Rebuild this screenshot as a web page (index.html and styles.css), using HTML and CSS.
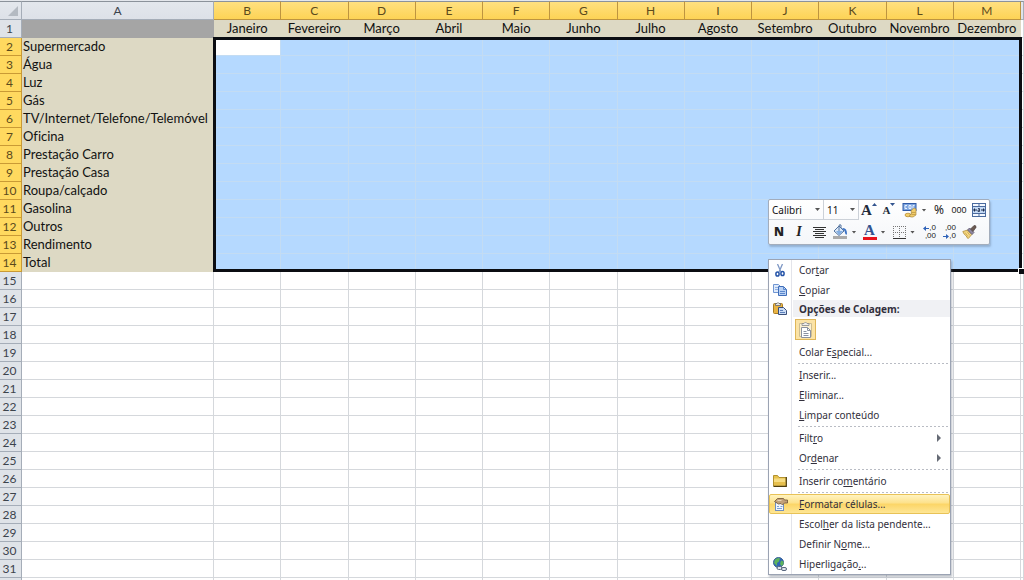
FILE: index.html
```html
<!DOCTYPE html>
<html lang="pt">
<head>
<meta charset="utf-8">
<title>Despesas</title>
<link rel="stylesheet" href="styles.css">
</head>
<body>
<main class="workbook">
  <table class="sheet">
    <colgroup id="cols"><col class="col-num"><col class="col-label"></colgroup>
    <thead id="head"></thead>
    <tbody id="body"></tbody>
  </table>
  <div class="selection"><span class="handle"></span></div>

  <div class="mini" role="toolbar" aria-label="Formatação">
    <div class="mini-row">
      <span class="pick pick-font"><select aria-label="Tipo de letra"><option>Calibri</option></select><i class="caret"></i></span>
      <span class="pick pick-size"><select aria-label="Tamanho"><option>11</option></select><i class="caret"></i></span>
      <button class="tool grow" aria-label="Aumentar"><span>A</span><svg width="5" height="3"><path d="M0 3L2.500 0L5 3z" fill="#33558f"/></svg></button>
      <button class="tool shrink" aria-label="Diminuir"><span>A</span><svg width="5" height="3"><path d="M0 0L2.500 3L5 0z" fill="#33558f"/></svg></button>
      <button class="tool wide" aria-label="Moeda"><svg width="16" height="16" viewBox="0 0 16 16"><rect x="1" y="1.500" width="13" height="7" fill="#7fa6e0" stroke="#2f5aa8"/><path d="M5 3.500H3v3h2M9 3.500H7v3h2zM12.500 3.500h-1.500v3h1.500" fill="none" stroke="#e6f0ff"/><ellipse cx="6" cy="13" rx="3" ry="1.800" fill="#f3cf6a" stroke="#a87310" stroke-width=".6"/><path d="M9 8.500l3-2.500 2 1v6l-3 2H8.500l-1-2 2-1z" fill="#f0cc6c" stroke="#9b7a33" stroke-width=".6"/><path d="M9.500 10.500h4M9.500 12.500h4" stroke="#b08a35" stroke-width=".6"/></svg><i class="caret"></i></button>
      <button class="tool percent">%</button>
      <button class="tool thousands">000</button>
      <button class="tool" aria-label="Unir e centrar"><svg width="14" height="14" viewBox="0 0 14 14"><rect x=".5" y=".5" width="13" height="13" fill="#f4f8fe" stroke="#4a6a9e"/><path d="M1 3.500h12M1 10.500h12M7 1v2.500M7 10.500V13" stroke="#4a6a9e"/><rect x="1" y="4" width="12" height="6" fill="#c4d9f4"/><path d="M2 7h3M12 7H9" stroke="#1c2c4d"/><path d="M1 7l2-2v4zM13 7l-2-2v4z" fill="#1c2c4d"/><path d="M6 5.500h1.500v3H6V7h1.500" fill="none" stroke="#1c2c4d" stroke-width=".8"/></svg></button>
    </div>
    <div class="mini-row">
      <button class="tool bold">N</button>
      <button class="tool italic">I</button>
      <button class="tool" aria-label="Centrar"><svg width="13" height="12"><path d="M0 1.500h13M2 3.500h9M0 5.500h13M2 7.500h9M0 9.500h13M2 11.500h9" stroke="#333"/></svg></button>
      <button class="tool wide" aria-label="Cor de preenchimento"><svg width="16" height="16" viewBox="0 0 16 16"><path d="M2 7l5-5 5 5-5 4.500z" fill="#dce9f9" stroke="#54749f"/><path d="M4 7h7l-4 4z" fill="#82aee3"/><path d="M7 7V2q0-2 2-1v3" fill="none" stroke="#54749f"/><path d="M11 4q4 0 4 6-1 2-2-1 0-3-3-4z" fill="#3d73c4"/><rect x="1" y="12" width="14" height="3" fill="#aaa"/></svg><i class="caret"></i></button>
      <button class="tool wide color" aria-label="Cor do tipo de letra"><span>A</span><i class="caret"></i></button>
      <button class="tool wide" aria-label="Limites"><svg width="13" height="13"><path d="M.5 0v12M6.500 0v12M12.500 0v12M0 .5h13M0 6.500h13" fill="none" stroke="#777" stroke-dasharray="1 1"/><path d="M0 12.500h13" stroke="#333"/></svg><i class="caret"></i></button>
      <button class="tool decimals"><span class="with-arrow"><svg width="6" height="5"><path d="M0 2.500L3 0v2h3v1H3v2z" fill="#2e62b8"/></svg>,0</span><span>,00</span></button>
      <button class="tool decimals"><span>,00</span><span class="with-arrow"><svg width="6" height="5"><path d="M6 2.500L3 0v2H0v1h3v2z" fill="#2e62b8"/></svg>,0</span></button>
      <button class="tool" aria-label="Pincel de formatação"><svg width="15" height="14" viewBox="0 0 15 14"><path d="M.8 6.500l5-1.500 4 4.500-3.500 4q-1.500-.5-2-2.500-2.500-1.500-3.500-4.500z" fill="#f4d984" stroke="#b08a35" stroke-width=".8"/><path d="M3 7.500l3 4M5 6.500l3 4" stroke="#cda249" stroke-width=".8"/><path d="M5.500 5l2-2 4.500 4.500-2 2z" fill="#8d86a0" stroke="#5c566f" stroke-width=".8"/><path d="M8.500 4l3.500-3.500q2.500-.5 2 2L11 6.500z" fill="#6b5a52" stroke="#443a38" stroke-width=".6"/></svg></button>
    </div>
  </div>

  <div class="menu" role="menu">
    <button class="item" role="menuitem"><span class="icon"><svg width="10" height="13" viewBox="0 0 10 13"><path d="M2.500 0l3.500 8M7.500 0L4 8" stroke="#7d97c4" stroke-width="1.300"/><ellipse cx="2.500" cy="10" rx="1.600" ry="2.100" fill="none" stroke="#2453a8" stroke-width="1.500"/><ellipse cx="7.500" cy="9.500" rx="1.600" ry="2.100" fill="none" stroke="#2453a8" stroke-width="1.500"/></svg></span><span>Cor<u>t</u>ar</span></button>
    <button class="item" role="menuitem"><span class="icon"><svg width="14" height="12" viewBox="0 0 14 12"><path d="M.5.500h5l2 2v6h-7z" fill="#dfeafa" stroke="#6f95d2"/><path d="M2 3.500h3M2 5.500h3" stroke="#8fb0e4"/><path d="M5.500 2.500h5l3 3v6h-8z" fill="#b9d1f4" stroke="#3f6db8"/><path d="M10.500 2.500v3h3M7 7.500h5M7 9.500h5" fill="none" stroke="#5c88cc"/></svg></span><span><u>C</u>opiar</span></button>
    <div class="item heading"><span class="icon"><svg width="14" height="13" viewBox="0 0 14 13"><rect x=".5" y="1.500" width="9" height="10" rx="1" fill="#e9b443" stroke="#a87b22"/><path d="M2.500 3.500V1.500H4q1-2 2 0h1.500v2z" fill="#e4e4e4" stroke="#666" stroke-width=".8"/><path d="M5.500 5.500h5l3 3v4h-8z" fill="#cbdcf5" stroke="#394f7a"/><path d="M7 8.500h3M7 10.500h5" stroke="#5b7fb9"/></svg></span><span>Opções de Colagem:</span></div>
    <div class="paste-row">
      <button class="paste" aria-label="Colar"><svg width="15" height="17" viewBox="0 0 15 17"><path d="M1.500 2.500h12v13h-12z" fill="#fbf0d2" stroke="#cdbd92"/><path d="M4 4.500V2.500h2q1.500-3 3 0h2v2z" fill="#eee" stroke="#888" stroke-width=".8"/><path d="M3.500 6.500h6l3 3v7h-9z" fill="#fff" stroke="#8a91a0"/><path d="M9.500 6.500v3h3M5.500 10.500h3M5.500 12.500h5M5.500 14.500h5" fill="none" stroke="#8a91a0"/></svg></button>
    </div>
    <button class="item" role="menuitem"><span class="icon"></span><span>Colar E<u>s</u>pecial...</span></button>
    <hr class="rule">
    <button class="item" role="menuitem"><span class="icon"></span><span><u>I</u>nserir...</span></button>
    <button class="item" role="menuitem"><span class="icon"></span><span><u>E</u>liminar...</span></button>
    <button class="item" role="menuitem"><span class="icon"></span><span><u>L</u>impar conteúdo</span></button>
    <hr class="rule">
    <button class="item sub" role="menuitem"><span class="icon"></span><span>Filt<u>r</u>o</span></button>
    <button class="item sub" role="menuitem"><span class="icon"></span><span>Or<u>d</u>enar</span></button>
    <hr class="rule">
    <button class="item" role="menuitem"><span class="icon"><svg width="14" height="12" viewBox="0 0 14 12"><path d="M.5.500h4l1.500 2h7v8.500H.5z" fill="#e8c24c" stroke="#b3922f"/><path d="M1 3.500h11.500v7H1z" fill="#f6dc83"/><path d="M1 7h11.500v3.500H1z" fill="#e6bf4d"/><path d="M13.300 2v9.300H.5" fill="none" stroke="#4d3c0d" stroke-width="1.200"/></svg></span><span>Inserir co<u>m</u>entário</span></button>
    <hr class="rule">
    <button class="item active" role="menuitem"><span class="icon"><svg width="14" height="13" viewBox="0 0 14 13"><rect x="1.500" y="4.500" width="8" height="8" fill="#f1f6fd" stroke="#6f8fc0"/><path d="M3 8.500h2M3 10.500h5M6.500 8.500h2" stroke="#7da0d6"/><path d="M.5 3.500l3-3h6l1 1.500h3v3h-3L8.500 7 7 5.500 4.500 6z" fill="#c2a078" stroke="#6e5334" stroke-width=".8"/><path d="M3.500 2.500h4" stroke="#ead5b5"/></svg></span><span><u>F</u>ormatar células...</span></button>
    <button class="item" role="menuitem"><span class="icon"></span><span>Escol<u>h</u>er da lista pendente...</span></button>
    <button class="item" role="menuitem"><span class="icon"></span><span>Definir N<u>o</u>me...</span></button>
    <button class="item" role="menuitem"><span class="icon"><svg width="14" height="14" viewBox="0 0 14 14"><circle cx="5.500" cy="5.500" r="5" fill="#2f66b5" stroke="#3a6396"/><path d="M2 2.500q3-2.500 5-1L6 4.500 4 6v3L1 6zM8 3.500l2.500 1v3L8.500 9 7 7z" fill="#5fb45c"/><rect x="4" y="9.500" width="5" height="3" rx="1.500" fill="#dde3ec" stroke="#59667d"/><rect x="8.500" y="10.500" width="5" height="3" rx="1.500" fill="#dde3ec" stroke="#59667d"/></svg></span><span>Hiperligação<u>.</u>..</span></button>
  </div>
</main>
<script src="sheet.js"></script>
</body>
</html>
```
FILE: styles.css
```css
* { box-sizing: border-box; }
body {
  margin: 0;
  height: 100vh;
  overflow: hidden;
  background: #fff;
  font-family: "Noto Sans", sans-serif;
  color: #111;
}
button, select { font: inherit; color: inherit; border: 0; padding: 0; margin: 0; background: none; }
.workbook { position: relative; border-top: 1px solid #e4e7ec; }

.sheet { width: 100%; table-layout: fixed; border-collapse: separate; border-spacing: 0; font-family: Lato, sans-serif; font-size: 13px; line-height: 17px; font-variant-ligatures: none; }
.col-num { width: 22px; }
.col-label { width: 192px; }
.col-rest { width: 3px; }
.sheet th, .sheet td {
  height: 18px;
  padding: 0;
  border-right: 1px solid #d5d8dc;
  border-bottom: 1px solid #d5d8dc;
  font-weight: 400;
  white-space: nowrap;
  overflow: hidden;
}
.sheet th { color: #3c434c; background: #dfe3e8; border-color: #a5adb8; text-align: center; font-size: 12px; }
.sheet tbody th { padding-right: 2px; }
.sheet thead th { border-top: 1px solid #8b929b; background: linear-gradient(#e3e7ed, #dde1e8); }
.sheet thead th.on { background: linear-gradient(#ffe080, #fdd355); border-color: #bd9440; color: #5b4a1c; border-top-color: #8b929b; }
.sheet tbody th.on { background: #ffd95f; border-color: #c99a35; color: #5b4a1c; }
.sheet .corner { vertical-align: bottom; }
.corner svg { display: block; margin: 0 3px 3px auto; }
.sheet .title { background: #a5a5a5; border-color: #a5a5a5; }
.sheet .month { background: #ddd9c4; border-color: #ddd9c4; text-align: center; }
.sheet .label { background: #ddd9c4; border-color: #ddd9c4; padding-left: 1px; }
.sheet .picked { background: #b5d9ff; border-color: #c3dcf3; }
.sheet .current { background: #fff; }
.selection { position: absolute; left: 213px; right: 2px; top: 36px; height: 235px; border: 3px solid #0b0d12; }
.handle { position: absolute; right: -5px; bottom: -5px; width: 6px; height: 6px; background: #0b0d12; border: solid #fff; border-width: 1px 0 0 1px; }

.mini {
  position: absolute;
  left: 768px;
  top: 198px;
  display: flex;
  flex-direction: column;
  gap: 2px;
  padding-bottom: 2px;
  border: 1px solid #a3adbc;
  border-radius: 2px;
  background: linear-gradient(#fff, #f4f6f9);
  box-shadow: 1px 2px 2px #7189a680;
}
.mini-row { display: flex; height: 20px; }
.pick { position: relative; display: flex; align-items: center; height: 20px; border: solid #ccd1d8; border-width: 0 1px 1px 0; font-size: 10px; }
.pick select { width: 100%; height: 100%; padding-left: 3px; appearance: none; outline: 0; }
.pick .caret { position: absolute; right: 3px; }
.pick-font { width: 55px; }
.pick-size { width: 35px; }
.caret { width: 5px; height: 3px; background: #555; clip-path: polygon(0 0, 100% 0, 50% 100%); }
.tool { width: 20px; height: 20px; display: flex; align-items: center; justify-content: center; font-size: 11px; line-height: 12px; color: #222; }
.tool.wide { width: 30px; gap: 4px; }
.grow, .shrink, .color { font-family: "Liberation Serif", serif; font-weight: 700; color: #222b3a; }
.grow { font-size: 15px; }
.shrink { font-size: 11px; }
.grow svg, .shrink svg { align-self: flex-start; margin-top: 3px; }
.color span { width: 14px; border-bottom: 3px solid #e8131b; font-size: 15px; line-height: 13px; color: #31538f; }
.percent { font-size: 12px; }
.thousands { font-family: "Liberation Sans", sans-serif; font-size: 9px; }
.bold { font-weight: 900; font-size: 12px; }
.italic { font-family: "Liberation Serif", serif; font-style: italic; font-weight: 700; font-size: 14px; }
.decimals { flex-direction: column; align-items: flex-end; padding-right: 3px; font-family: "Liberation Sans", sans-serif; font-size: 8px; line-height: 8px; }
.with-arrow { display: flex; align-items: center; height: 8px; }

.menu {
  position: absolute;
  left: 768px;
  top: 258px;
  width: 183px;
  border: 1px solid #9ba3b3;
  background: linear-gradient(90deg, #fff 22px, #e3e4ea 22px, #e3e4ea 23px, #fff 23px);
  box-shadow: 1px 2px 2px #5a657566;
  font-size: 10px;
  line-height: 14px;
  color: #32303c;
}
.item { display: flex; align-items: center; width: 100%; height: 20px; text-align: left; white-space: nowrap; }
.icon { flex: none; width: 22px; margin-right: 8px; display: flex; justify-content: center; }
.icon svg { display: block; }
.item u { text-underline-offset: 1px; }
.heading { height: 17px; font-weight: 700; background: linear-gradient(90deg, transparent 24px, #f0f1f4 24px); }
.paste-row { height: 25px; padding: 2px 0 0 26px; }
.paste { width: 21px; height: 21px; display: flex; align-items: center; justify-content: center; border: 1px solid #dfb659; background: #fbe3a6; }
.rule { height: 3px; margin: 0 2px 0 29px; border: 0; background: repeating-linear-gradient(90deg, #b9bcc4 0 2px, transparent 2px 4px) 0 1px / 100% 1px no-repeat; }
.sub::after { content: ""; width: 4px; height: 8px; margin: 0 9px 0 auto; background: #666b75; clip-path: polygon(0 0, 100% 50%, 0 100%); }
.active { border: 1px solid #e8c257; border-radius: 2px; background: linear-gradient(#fff3c0, #fde18a 45%, #fcd566 50%, #fee695); }
.active .icon { width: 21px; }
```
FILE: sheet.js
```js
const months = ["Janeiro", "Fevereiro", "Março", "Abril", "Maio", "Junho", "Julho", "Agosto", "Setembro", "Outubro", "Novembro", "Dezembro"];
const labels = ["Supermercado", "Água", "Luz", "Gás", "TV/Internet/Telefone/Telemóvel", "Oficina", "Prestação Carro", "Prestação Casa", "Roupa/calçado", "Gasolina", "Outros", "Rendimento", "Total"];
const lastRow = 31;

document.getElementById("cols").innerHTML += months.map(() => "<col>").join("") + '<col class="col-rest">';

document.getElementById("head").innerHTML =
  '<tr><th class="corner"><svg width="10" height="10"><path d="M10 0v10H0z" fill="#b4bac2"/></svg></th><th>A</th>' +
  months.map((m, i) => `<th class="on">${String.fromCharCode(66 + i)}</th>`).join("") + "<th></th></tr>";

let rows = '<tr><th>1</th><td class="title"></td>' + months.map(m => `<td class="month">${m}</td>`).join("") + "<td></td></tr>";
for (let n = 2; n <= lastRow + 1; n++) {
  const label = labels[n - 2];
  rows += `<tr><th class="${label ? "on" : ""}">${n <= lastRow ? n : ""}</th><td class="${label ? "label" : ""}">${label || ""}</td>`;
  rows += months.map((m, i) => `<td class="${label ? "picked" : ""}${n === 2 && i === 0 ? " current" : ""}"></td>`).join("");
  rows += "<td></td></tr>";
}
document.getElementById("body").innerHTML = rows;
```
